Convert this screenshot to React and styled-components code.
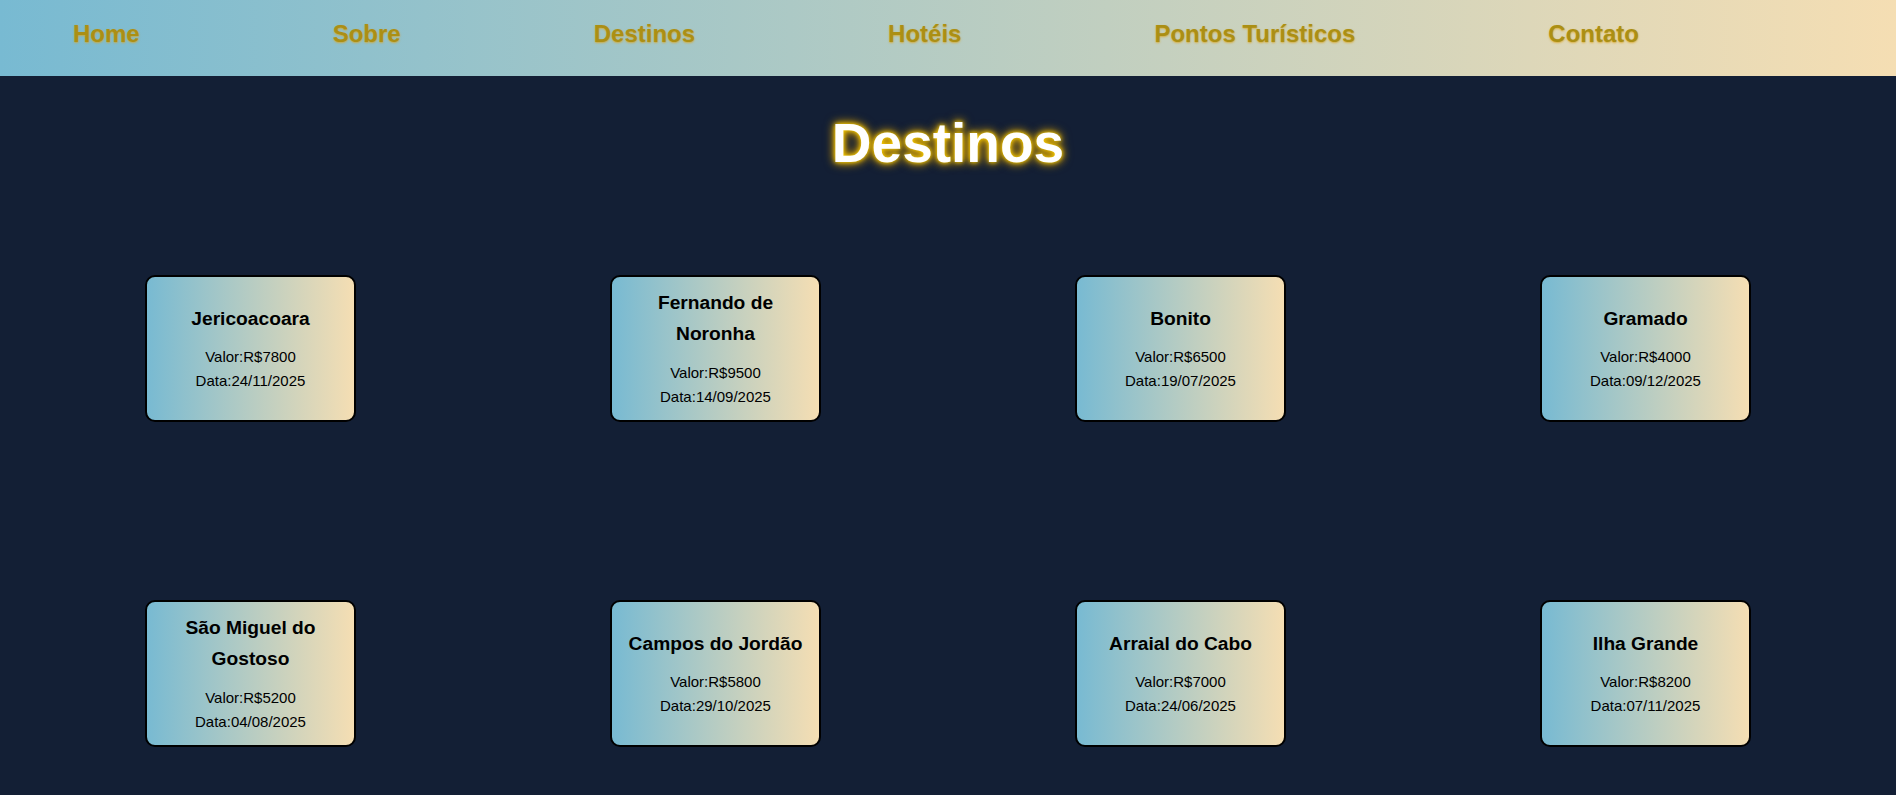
import styled, { createGlobalStyle } from 'styled-components'

const GlobalStyle = createGlobalStyle`
    body {
        margin: 0;
        background-color: #131f35;
        font-family: "Liberation Sans", Arial, sans-serif;
    }
`;

const Nav = styled.nav`
    height: 76px;
    display: flex;
    align-items: center;
    gap: 193px;
    padding: 0 0 8px 73px;
    box-sizing: border-box;
    background: linear-gradient(to right, #78bad2, #f5deb3);
`;

const NavLink = styled.a`
    font-size: 24px;
    font-weight: bold;
    color: #ab8f14;
    text-decoration: none;
    text-shadow: 0 1px 2px rgba(218, 165, 32, 0.8);
    cursor: pointer;
`;

const Title = styled.h1`
    margin: 35px 0 100px;
    text-align: center;
    font-size: 55px;
    font-weight: bold;
    color: #ffffff;
    text-shadow: 0 0 4px #ffd700, 0 0 8px #f0b400, 0 0 12px #a87a08;
`;

const Grid = styled.section`
    display: grid;
    grid-template-columns: repeat(4, 1fr);
    row-gap: 178px;
    justify-items: center;
    padding: 0 18px 48px;
`;

const Card = styled.div`
    width: 211px;
    height: 147px;
    box-sizing: border-box;
    padding: 10px;
    display: flex;
    flex-direction: column;
    justify-content: center;
    align-items: center;
    text-align: center;
    border: 2px solid #000;
    border-radius: 10px;
    background: linear-gradient(to right, #78bad2, #f5deb3);
    color: #000;
`;

const CardName = styled.h3`
    margin: 0 0 11px;
    font-size: 19.2px;
    line-height: 1.6;
    font-weight: bold;
`;

const Info = styled.p`
    margin: 0;
    font-size: 15px;
    line-height: 1.6;
`;

const links = ['Home', 'Sobre', 'Destinos', 'Hotéis', 'Pontos Turísticos', 'Contato'];

const destinos = [
    { nome: 'Jericoacoara', valor: 7800, data: '24/11/2025' },
    { nome: 'Fernando de Noronha', valor: 9500, data: '14/09/2025' },
    { nome: 'Bonito', valor: 6500, data: '19/07/2025' },
    { nome: 'Gramado', valor: 4000, data: '09/12/2025' },
    { nome: 'São Miguel do Gostoso', valor: 5200, data: '04/08/2025' },
    { nome: 'Campos do Jordão', valor: 5800, data: '29/10/2025' },
    { nome: 'Arraial do Cabo', valor: 7000, data: '24/06/2025' },
    { nome: 'Ilha Grande', valor: 8200, data: '07/11/2025' },
];

const App = () => {
    return (
        <>
            <GlobalStyle />
            <Nav>
                {links.map(l => <NavLink key={l}>{l}</NavLink>)}
            </Nav>
            <Title>Destinos</Title>
            <Grid>
                {destinos.map(d => (
                    <Card key={d.nome}>
                        <CardName>{d.nome}</CardName>
                        <Info>Valor:R${d.valor}</Info>
                        <Info>Data:{d.data}</Info>
                    </Card>
                ))}
            </Grid>
        </>
    );
}

export default App;
